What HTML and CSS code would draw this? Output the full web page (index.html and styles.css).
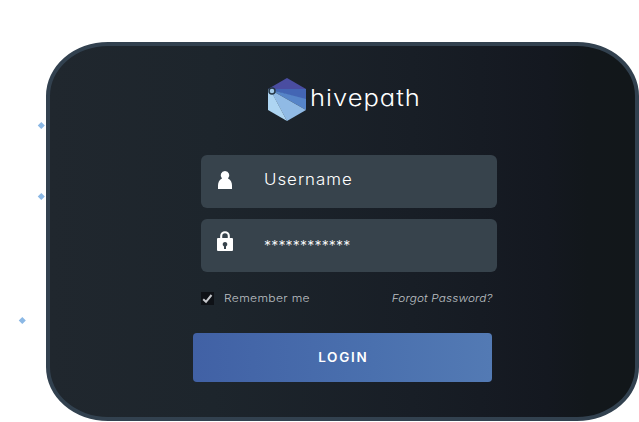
FILE: index.html
```html
<!DOCTYPE html>
<html lang="en">
<head>
<meta charset="utf-8">
<title>hivepath login</title>
<link rel="stylesheet" href="styles.css">
</head>
<body>
<i class="spark spark-a"></i>
<i class="spark spark-b"></i>
<i class="spark spark-c"></i>
<main class="card">
  <header class="brand">
    <svg class="mark" viewBox="0 0 38 43">
      <path fill="#4a4da1" d="M19 0 38 11H0z"/>
      <path fill="#4365b4" d="M0 11h38v11z"/>
      <path fill="#5684c8" d="M2 11.5 38 21v11z"/>
      <path fill="#90bae5" d="M2 11.5 38 32 19 43z"/>
      <path fill="#aed5f2" d="M0 11 3 13 19 43 0 32z"/>
      <circle cx="4" cy="13" r="3" fill="#a4cbea" stroke="#263747" stroke-width="1.5"/>
    </svg>
    <span class="name">hivepath</span>
  </header>
  <form class="login">
    <div class="field">
      <svg class="icon user" viewBox="0 0 16 20">
        <path d="M8 1a4.3 4.3 0 0 1 3 7.400c3 1.400 4 4 4 7.200V19H1v-3.400c0-3.200 1-5.800 4-7.200A4.300 4.300 0 0 1 8 1z"/>
      </svg>
      <span class="value username">Username</span>
    </div>
    <div class="field">
      <svg class="icon lock" viewBox="0 0 16 20">
        <path d="M4.200 8V5a3.800 3.800 0 0 1 7.600 0v3" fill="none" stroke="#fff" stroke-width="2.100"/>
        <rect y="7" width="16" height="13" rx="1"/>
        <path fill="#37434c" d="M8 11a2.300 2.300 0 0 1 1 4.400V18H7v-2.600A2.300 2.300 0 0 1 8 11z"/>
      </svg>
      <span class="value password">************</span>
    </div>
    <div class="options">
      <svg class="check" viewBox="0 0 13 13"><path d="M2.200 7.300 5 9.800 10.500 3" fill="none" stroke="#c6c8cc" stroke-width="2"/></svg>
      <span class="remember">Remember me</span>
      <span class="forgot">Forgot Password?</span>
    </div>
    <div class="submit"><span class="label">LOGIN</span></div>
  </form>
</main>
</body>
</html>
```
FILE: styles.css
```css
* { box-sizing: border-box; }
body {
  margin: 0;
  width: 639px;
  height: 422px;
  padding: 42.300px 0 0 46.300px;
  overflow: hidden;
  background: #fff;
  font-family: Inter, "Liberation Sans", sans-serif;
}
.card {
  width: 592.300px;
  height: 378.500px;
  border: 4px solid #32414f;
  border-radius: 62px / 54px;
  background: linear-gradient(90deg, #20272e 0%, #1d252c 28%, #181e26 62%, #141820 85%, #12171b 92%, #12171a 100%);
}
.spark {
  position: absolute;
  width: 4.600px;
  height: 4.600px;
  background: #8bb8e5;
  transform: rotate(45deg);
}
.spark-a { left: 39px; top: 123px; }
.spark-b { left: 39px; top: 194px; }
.spark-c { left: 19.500px; top: 317.700px; }
.brand {
  display: flex;
  align-items: flex-start;
  margin: 31.500px 0 0 217.500px;
  height: 43px;
}
.mark { width: 38px; height: 43px; flex: none; }
.name {
  margin: 5px 0 0 4px;
  color: #fff;
  font-size: 23px;
  line-height: 30px;
  font-weight: 300;
  font-feature-settings: "cv11";
  letter-spacing: 0.900px;
  transform: scaleX(1.110);
  transform-origin: left;
}
.login { margin: 34px 0 0 151.200px; width: 295.800px; }
.field {
  display: flex;
  height: 53px;
  margin-bottom: 11.500px;
  padding-left: 15.500px;
  border-radius: 6px;
  background: #37434c;
  color: #fff;
}
.icon { width: 16px; height: 20px; fill: #fff; flex: none; }
.user { margin-top: 15px; }
.lock { margin-top: 12px; }
.value {
  margin-left: 31px;
  font-weight: 300;
  line-height: 20px;
}
.username {
  margin-top: 15.500px;
  font-size: 15.500px;
  letter-spacing: 0.900px;
  transform: scaleX(1.090);
  transform-origin: left;
}
.password { margin-top: 16.500px; font-size: 14px; letter-spacing: 0.200px; }
.options {
  display: flex;
  align-items: center;
  height: 14px;
  margin-top: 19.500px;
  padding-right: 5px;
  font-size: 10.800px;
  font-weight: 300;
  color: #bdc0c4;
  white-space: nowrap;
}
.check { width: 13px; height: 13px; background: #0e1116; }
.remember {
  margin-left: 10px;
  letter-spacing: 0.300px;
  transform: scaleX(1.120);
  transform-origin: left;
}
.forgot {
  margin-left: auto;
  font-style: italic;
  letter-spacing: 0.150px;
  transform: scaleX(1.090);
  transform-origin: right;
}
.submit {
  width: 299px;
  height: 49.300px;
  margin: 27px 0 0 -8px;
  border-radius: 4px;
  background: linear-gradient(90deg, #4161a5, #4a70ae 60%, #537ab4);
  color: #fff;
  font-size: 12.500px;
  font-weight: 600;
  line-height: 50px;
  text-align: center;
}
.label {
  display: inline-block;
  letter-spacing: 1.600px;
  transform: scaleX(1.080);
}
```
